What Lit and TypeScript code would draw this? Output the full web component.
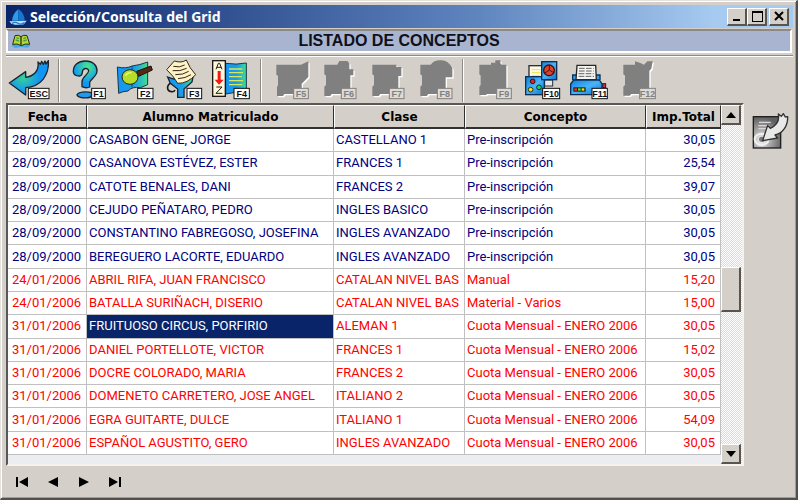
import { LitElement, html, svg, css, nothing } from "lit";
import { customElement, property, state } from "lit/decorators.js";
import { classMap } from "lit/directives/class-map.js";

interface Row {
  fecha: string;
  alumno: string;
  clase: string;
  concepto: string;
  total: string;
  pending?: boolean;
}

const ROWS: Row[] = [
  { fecha: "28/09/2000", alumno: "CASABON GENE, JORGE", clase: "CASTELLANO 1", concepto: "Pre-inscripción", total: "30,05" },
  { fecha: "28/09/2000", alumno: "CASANOVA ESTÉVEZ, ESTER", clase: "FRANCES 1", concepto: "Pre-inscripción", total: "25,54" },
  { fecha: "28/09/2000", alumno: "CATOTE BENALES, DANI", clase: "FRANCES 2", concepto: "Pre-inscripción", total: "39,07" },
  { fecha: "28/09/2000", alumno: "CEJUDO PEÑATARO, PEDRO", clase: "INGLES BASICO", concepto: "Pre-inscripción", total: "30,05" },
  { fecha: "28/09/2000", alumno: "CONSTANTINO FABREGOSO, JOSEFINA", clase: "INGLES AVANZADO", concepto: "Pre-inscripción", total: "30,05" },
  { fecha: "28/09/2000", alumno: "BEREGUERO LACORTE, EDUARDO", clase: "INGLES AVANZADO", concepto: "Pre-inscripción", total: "30,05" },
  { fecha: "24/01/2006", alumno: "ABRIL RIFA, JUAN FRANCISCO", clase: "CATALAN NIVEL BAS", concepto: "Manual", total: "15,20", pending: true },
  { fecha: "24/01/2006", alumno: "BATALLA SURIÑACH, DISERIO", clase: "CATALAN NIVEL BAS", concepto: "Material - Varios", total: "15,00", pending: true },
  { fecha: "31/01/2006", alumno: "FRUITUOSO CIRCUS, PORFIRIO", clase: "ALEMAN 1", concepto: "Cuota Mensual - ENERO 2006", total: "30,05", pending: true },
  { fecha: "31/01/2006", alumno: "DANIEL PORTELLOTE, VICTOR", clase: "FRANCES 1", concepto: "Cuota Mensual - ENERO 2006", total: "15,02", pending: true },
  { fecha: "31/01/2006", alumno: "DOCRE COLORADO, MARIA", clase: "FRANCES 2", concepto: "Cuota Mensual - ENERO 2006", total: "30,05", pending: true },
  { fecha: "31/01/2006", alumno: "DOMENETO CARRETERO, JOSE ANGEL", clase: "ITALIANO 2", concepto: "Cuota Mensual - ENERO 2006", total: "30,05", pending: true },
  { fecha: "31/01/2006", alumno: "EGRA GUITARTE, DULCE", clase: "ITALIANO 1", concepto: "Cuota Mensual - ENERO 2006", total: "54,09", pending: true },
  { fecha: "31/01/2006", alumno: "ESPAÑOL AGUSTITO, GERO", clase: "INGLES AVANZADO", concepto: "Cuota Mensual - ENERO 2006", total: "30,05", pending: true },
];

const gradients = svg`
  <defs>
    <linearGradient id="sea" x1="0" y1="0" x2="1" y2="0">
      <stop offset="0" stop-color="#1597f5"/><stop offset="0.55" stop-color="#1a9cea"/><stop offset="1" stop-color="#42e08c"/>
    </linearGradient>
    <radialGradient id="mint" cx="0.6" cy="0.22" r="0.6">
      <stop offset="0" stop-color="#48e88c"/><stop offset="1" stop-color="#1195f2"/>
    </radialGradient>
    <radialGradient id="lagoon" cx="0.36" cy="0.5" r="0.42">
      <stop offset="0" stop-color="#38d098"/><stop offset="1" stop-color="#1195f2"/>
    </radialGradient>
    <linearGradient id="sky" x1="0" y1="0" x2="1" y2="1">
      <stop offset="0" stop-color="#0c80e0"/><stop offset="0.5" stop-color="#48b4f8"/><stop offset="1" stop-color="#0a6fd0"/>
    </linearGradient>
  </defs>`;

const silhouette = (d: string) => svg`
  <path d=${d} fill="#fff" transform="translate(4 4)"/>
  <path d=${d} fill="#808080"/>`;

interface Tool {
  key: string;
  label: string;
  view: string;
  badge: [number, number];
  off?: boolean;
  art: unknown;
}

const GROUPS: Tool[][] = [
  [
    {
      key: "ESC", label: "Salir", view: "18 15 144 138", badge: [84, 62],
      art: svg`<path d="M28 93 L77 59 V76 C100 73 118 58 114 30 L121 37 L125 28 L130 37 L135 27 L138 36 L145 26 C148 68 124 104 77 107 V129 Z" fill="url(#lagoon)" stroke="#1c2430" stroke-width="4" stroke-linejoin="round"/>`,
    },
  ],
  [
    {
      key: "F1", label: "Ayuda", view: "192 15 144 138", badge: [274, 41],
      art: svg`<path d="M220 60 C219 38 236 27 256 27 C279 27 292 41 291 57 C290 75 272 80 269 91 V105 Q258 110 246 104 V88 C247 74 264 68 266 57 C265 46 248 47 247 60 C247 67 245 71 238 72 C228 72 221 68 220 60 Z" fill="url(#mint)" stroke="#182430" stroke-width="4"/>
        <path d="M231 129 C233 120 257 117 277 123 L272 135 C258 140 235 138 231 129 Z" fill="#1a9cf0" stroke="#182430" stroke-width="4"/>`,
    },
    {
      key: "F2", label: "Buscar", view: "6 15 144 138", badge: [82, 46],
      art: svg`<path d="M22 45 Q48 51 66 42 Q90 39 113 30 V98 L91 107 Q66 103 54 117 Q38 118 26 124 Z" fill="url(#sea)" stroke="#16364c" stroke-width="3"/>
        <path d="M66 42 V106" stroke="#0f4e80" stroke-width="3"/>
        <path d="M80 58 L123 42 L127 54 L86 73 Z" fill="#5a2812" stroke="#1c1008" stroke-width="3"/>
        <ellipse cx="60" cy="75" rx="24" ry="22" fill="#b8dd28" stroke="#202810" stroke-width="3"/>
        <path d="M46 71 Q52 61 65 62" stroke="#eaf878" stroke-width="4" fill="none"/>`,
    },
    {
      key: "F3", label: "Filtrar", view: "150 15 144 138", badge: [230, 44],
      art: svg`<path d="M184 92 C169 99 169 117 184 119 Q192 120 195 114" fill="none" stroke="#181818" stroke-width="5"/>
        <path d="M173 75 Q210 92 250 70 L246 90 L222 111 V136 H203 V111 L181 94 Z" fill="url(#sea)" stroke="#182430" stroke-width="4"/>
        <path d="M170 53 L193 27 Q215 34 229 24 Q239 49 257 68 Q232 95 203 94 Q190 71 170 53 Z" fill="#fff2c4" stroke="#302818" stroke-width="3"/>
        <path d="M190 43 Q209 48 224 39 M188 56 Q210 59 230 49 M196 68 Q220 69 236 58 M204 80 Q226 79 243 68" fill="none" stroke="#302818" stroke-width="3"/>`,
    },
    {
      key: "F4", label: "Ordenar", view: "294 15 144 138", badge: [371, 46],
      art: svg`<path d="M347 34 Q380 39 409 33 V117 Q378 120 347 126 Z" fill="url(#sea)" stroke="#16364c" stroke-width="3"/>
        <path d="M357 51 H397 M357 62 H399 M357 74 H396 M357 86 H399 M357 98 H397" stroke="#d8e858" stroke-width="4"/>
        <rect x="308" y="26" width="38" height="107" fill="#fff8d8" stroke="#181818" stroke-width="4"/>
        <path d="M318 52 L325 34 H329 L336 52 M321 46 H333 M319 105 H336 L318 124 H337" fill="none" stroke="#181818" stroke-width="3"/>
        <path d="M323 57 H332 V83 H341 L327 98 L314 83 H323 Z" fill="#f01818"/>`,
    },
  ],
  [
    { key: "F5", label: "Función F5", view: "33 15 144 138", badge: [115, 44], off: true, art: silhouette("M64 38 H138 L160 28 V75 L140 95 V126 H88 L84 132 H66 V105 L69 100 V72 L64 68 Z") },
    { key: "F6", label: "Función F6", view: "177 15 144 138", badge: [258, 44], off: true, art: silhouette("M208 38 H247 L253 27 H277 L283 34 V52 H295 V70 H286 V126 H230 L226 132 H208 V104 L213 99 V71 L208 67 Z") },
    { key: "F7", label: "Función F7", view: "321 15 144 138", badge: [402, 44], off: true, art: silhouette("M352 38 H424 V45 H439 V72 H430 V126 H376 L371 132 H352 V104 L357 99 V71 L352 67 Z") },
    { key: "F8", label: "Función F8", view: "465 15 144 138", badge: [546, 44], off: true, art: silhouette("M496 38 H527 Q538 23 559 25 Q580 26 592 48 V76 H572 V126 H520 L515 132 H496 V104 L501 99 V71 L496 67 Z") },
  ],
  [
    { key: "F9", label: "Función F9", view: "24 15 144 138", badge: [109, 44], off: true, art: silhouette("M58 38 H93 V32 H106 V25 H121 V34 L125 38 H139 V126 H82 L77 129 H58 V104 L62 99 V71 L58 67 Z") },
    {
      key: "F10", label: "Gráficos", view: "168 15 144 138", badge: [247, 51],
      art: svg`<rect x="254" y="84" width="24" height="18" fill="#e8e8e8" stroke="#283038" stroke-width="3"/>
        <rect x="207" y="41" width="38" height="36" fill="#fffbe0" stroke="#283038" stroke-width="4"/>
        <path d="M215 53 H242 M215 62 H242 M215 71 H238" stroke="#f0e058" stroke-width="3"/>
        <rect x="197" y="74" width="56" height="54" fill="url(#sky)" stroke="#0c3058" stroke-width="4"/>
        <rect x="245" y="29" width="45" height="54" fill="url(#sky)" stroke="#0c3058" stroke-width="4"/>
        <circle cx="267" cy="55" r="16" fill="#e04028" stroke="#401010" stroke-width="4"/>
        <path d="M268 40 V54 L254 64 M268 54 L281 62" fill="none" stroke="#501010" stroke-width="3"/>
        <circle cx="218" cy="88" r="7" fill="#e02020" stroke="#301010" stroke-width="3"/>
        <circle cx="212" cy="113" r="7" fill="#f0e020" stroke="#303010" stroke-width="3"/>
        <circle cx="237" cy="106" r="7" fill="#20d060" stroke="#103010" stroke-width="3"/>`,
    },
    {
      key: "F11", label: "Imprimir", view: "312 15 144 138", badge: [395, 46],
      art: svg`<path d="M338 84 V69 H420 V84" fill="#30a0f0" stroke="#0c3058" stroke-width="4"/>
        <rect x="428" y="95" width="9" height="12" fill="#d03048" stroke="#401018" stroke-width="3"/>
        <path d="M348 83 L351 40 H407 L409 83 Z" fill="#f4f4f0" stroke="#282828" stroke-width="4"/>
        <path d="M357 49 H401 M357 57 H401 M356 65 H401 M356 73 H402" stroke="#606468" stroke-width="3" stroke-dasharray="17 4"/>
        <path d="M332 96 L341 84 H418 L426 96 V128 H332 Z" fill="url(#sky)" stroke="#0c3058" stroke-width="4"/>
        <rect x="340" y="106" width="37" height="13" fill="#202020"/>
        <rect x="343" y="109" width="8" height="7" fill="#f03020"/><rect x="354" y="109" width="8" height="7" fill="#50e030"/><rect x="365" y="109" width="8" height="7" fill="#f0e020"/>`,
    },
    { key: "F12", label: "Función F12", view: "456 15 144 138", badge: [538, 47], off: true, art: silhouette("M490 38 H525 V28 L541 33 L552 38 L562 28 H578 L574 50 L568 56 V126 H514 L509 131 H490 V104 L495 99 V71 L490 67 Z") },
  ],
];

@customElement("tool-button")
class ToolButton extends LitElement {
  @property({ attribute: false }) tool!: Tool;

  static styles = css`
    :host { display: block; flex: none; }
    button { display: block; width: 48px; height: 46px; padding: 0; border: 0; background: none; }
    svg { display: block; width: 48px; height: 46px; }
    text { font: bold 27px "Liberation Sans", Arial, sans-serif; text-anchor: middle; }
  `;

  render() {
    const t = this.tool;
    const [x, w] = t.badge;
    const ink = t.off ? "#808080" : "#101010";
    return html`<button ?disabled=${t.off} aria-label=${t.label}>
      <svg viewBox=${t.view} aria-hidden="true">
        ${gradients}${t.art}
        <rect x=${x + 1} y="109" width=${w} height="31" fill=${t.off ? "#dedad4" : "#fff"} stroke=${ink} stroke-width="3"/>
        <text x=${x + w / 2 + 1} y="134" fill=${ink}>${t.key}</text>
      </svg>
    </button>`;
  }
}

@customElement("app-root")
class AppRoot extends LitElement {
  @state() private selected = 8;

  static styles = css`
    :host {
      display: block;
      background: #fff;
      font: 13px/18px "Liberation Sans", Arial, sans-serif;
      color: #000;
    }
    * { box-sizing: border-box; }
    button { font: inherit; color: inherit; padding: 0; margin: 0; }
    .window {
      background: #d4cfc8;
      border: 1px solid #e4e2de;
      border-right: 2px solid #505050;
      border-bottom: 2px solid #505050;
      box-shadow: inset 1px 1px #fff, inset -1px -1px #a09c96;
      padding: 4px 3px 0 5px;
      margin-right: 2px;
    }
    .title {
      display: flex;
      align-items: center;
      height: 23px;
      padding: 0 4px 0 2px;
      background: linear-gradient(90deg, #0a246a, #5f85bf 60%, #a6caf0 90%);
    }
    .title h1 {
      flex: 1;
      margin: 0 0 0 2px;
      font: bold 14px/20px "Noto Sans", "DejaVu Sans", sans-serif;
      color: #fff;
    }
    .title svg { width: 20px; height: 18px; }
    .raised {
      display: grid;
      place-items: center;
      background: #d4cfc8;
      border: 1px solid #fff;
      border-right: 2px solid #58544f;
      border-bottom: 2px solid #58544f;
    }
    .caption-btn { width: 20px; height: 18px; }
    .caption-btn.close { margin-left: 2px; }
    .caption-btn svg { width: 14px; height: 12px; }
    .banner {
      display: grid;
      grid-template-columns: 32px 1fr 32px;
      align-items: center;
      height: 24px;
      margin: 1px 1px 2px 0;
      border: 2px solid #fff;
      border-top-color: #8c8a86;
      background: #a8b4d0;
    }
    .banner svg { width: 20px; height: 16px; margin-left: 3px; }
    .banner h2 { margin: 0; text-align: center; font-size: 16px; line-height: 20px; color: #101018; }
    .toolbar {
      display: flex;
      align-items: center;
      height: 48px;
      border-top: 1px solid #8c8a86;
      box-shadow: inset 0 1px #fff;
      padding-top: 1px;
    }
    .sep { flex: none; width: 2px; height: 43px; margin: 0 4px; border-left: 1px solid #8c8a86; border-right: 1px solid #fff; }
    .main { display: flex; align-items: flex-start; }
    .grid {
      flex: 1;
      min-width: 0;
      display: flex;
      border: 2px solid #585858;
      border-right-color: #f4f2ee;
      border-bottom-color: #f4f2ee;
      background: #ecedf0;
    }
    .rows { flex: 1; min-width: 0; padding-bottom: 9px; }
    table { width: 100%; height: 350px; table-layout: fixed; border-spacing: 0; }
    col.fecha { width: 79px; }
    col.clase { width: 131px; }
    col.concepto { width: 181px; }
    col.total { width: 75px; }
    th {
      height: 24px;
      padding: 0;
      background: #d4cfc8;
      border: 1px solid #fff;
      border-right: 1px solid #303030;
      border-bottom: 2px solid #303030;
      font: bold 12px/16px "DejaVu Sans", sans-serif;
    }
    td {
      height: 23px;
      padding: 0 0 0 2px;
      background: #fff;
      border-right: 1px solid #c0c0c0;
      border-bottom: 1px solid #c0c0c0;
      color: #000080;
      font: 13px/18px Roboto, "Liberation Sans", sans-serif;
      white-space: nowrap;
      overflow: hidden;
    }
    td.fecha { padding-left: 4px; }
    td.total { text-align: right; padding-right: 5px; }
    .pending td { color: #f00; }
    td.cursor, .pending td.cursor { background: #0a246a; color: #fff; }
    .scroll {
      flex: none;
      display: flex;
      flex-direction: column;
      width: 21px;
      padding: 0 1px 0 0;
      background: repeating-conic-gradient(#dcd9d4 0 25%, #fff 0 50%) 0 0 / 2px 2px;
    }
    .scroll .raised { width: 20px; height: 20px; }
    .scroll svg { width: 10px; height: 6px; }
    .track { flex: 1; display: grid; grid-template-rows: 142fr 45px 132fr; }
    .thumb { grid-row: 2; background: #d4cfc8; border: 1px solid #fff; border-right: 2px solid #58544f; border-bottom: 2px solid #58544f; }
    .side { flex: none; width: 49px; padding: 9px 0 0 8px; }
    .side button { display: block; width: 38px; height: 38px; background: none; border: 0; }
    .side svg { display: block; width: 38px; height: 38px; }
    .nav { display: flex; height: 32px; align-items: center; }
    .nav button { display: grid; place-items: center; width: 31px; height: 20px; border: 0; background: none; }
    .nav svg { width: 14px; height: 10px; }
  `;

  private row(r: Row, i: number) {
    return html`<tr class=${classMap({ pending: !!r.pending })} @click=${() => (this.selected = i)}>
      <td class="fecha">${r.fecha}</td>
      <td class=${classMap({ cursor: i === this.selected })}>${r.alumno}</td>
      <td>${r.clase}</td>
      <td>${r.concepto}</td>
      <td class="total">${r.total}</td>
    </tr>`;
  }

  render() {
    return html`<div class="window">
      <header class="title">
        <svg viewBox="0 0 60 54" aria-hidden="true">
          <path d="M31 3 C18 14 13 26 12 38 H31 Z" fill="#2e9ae8"/>
          <path d="M31 3 C45 12 50 26 50 38 H31 Z" fill="#1476d0"/>
          <path d="M4 40 L56 38 L48 49 Q28 53 10 47 Z" fill="#b8e0f8"/>
          <path d="M12 46 Q22 40 30 46 T50 44" fill="none" stroke="#207cc8" stroke-width="4"/>
        </svg>
        <h1>Selección/Consulta del Grid</h1>
        <button class="raised caption-btn" aria-label="Minimizar"><svg viewBox="0 0 14 12"><path d="M3 10 H10" stroke="#000" stroke-width="2"/></svg></button>
        <button class="raised caption-btn" aria-label="Maximizar"><svg viewBox="0 0 14 12"><path d="M2 1 H13 V12 H2 Z M3 3 V11 H12 V3 Z" fill="#000" fill-rule="evenodd"/></svg></button>
        <button class="raised caption-btn close" aria-label="Cerrar"><svg viewBox="0 0 14 12"><path d="M3 2 L11 10 M11 2 L3 10" stroke="#000" stroke-width="2"/></svg></button>
      </header>
      <section class="banner">
        <svg viewBox="0 0 60 48" aria-hidden="true">
          <path d="M2 38 L8 30 H52 L58 38 L50 44 L30 42 L12 45 Z" fill="#48a8e8"/>
          <path d="M5 34 L12 8 Q22 4 30 11 Q38 4 48 8 L56 34 Q42 30 31 38 Q18 30 5 34 Z" fill="#b8d838" stroke="#283010" stroke-width="3"/>
          <path d="M30 11 V37" stroke="#283010" stroke-width="4"/>
          <path d="M16 14 L24 17 M14 21 L24 24 M37 17 L45 14 M37 24 L47 21" stroke="#48a040" stroke-width="4"/>
        </svg>
        <h2>LISTADO DE CONCEPTOS</h2>
      </section>
      <nav class="toolbar" aria-label="Herramientas">
        ${GROUPS.map((g, i) => html`${i ? html`<span class="sep"></span>` : nothing}${g.map((t) => html`<tool-button .tool=${t}></tool-button>`)}`)}
      </nav>
      <main class="main">
        <div class="grid">
          <div class="rows">
            <table>
              <colgroup><col class="fecha" /><col /><col class="clase" /><col class="concepto" /><col class="total" /></colgroup>
              <thead><tr><th>Fecha</th><th>Alumno Matriculado</th><th>Clase</th><th>Concepto</th><th>Imp.Total</th></tr></thead>
              <tbody>${ROWS.map((r, i) => this.row(r, i))}</tbody>
            </table>
          </div>
          <div class="scroll">
            <button class="raised" aria-label="Subir"><svg viewBox="0 0 10 6"><path d="M0 6 L5 0 L10 6 Z"/></svg></button>
            <div class="track"><div class="thumb"></div></div>
            <button class="raised" aria-label="Bajar"><svg viewBox="0 0 10 6"><path d="M0 0 H10 L5 6 Z"/></svg></button>
          </div>
        </div>
        <aside class="side">
          <button aria-label="Seleccionar">
            <svg viewBox="336 51 114 114" aria-hidden="true">
              <defs>
                <radialGradient id="glow" cx="0.3" cy="0.75" r="0.75"><stop offset="0" stop-color="#fff"/><stop offset="0.4" stop-color="#b0b0b0"/><stop offset="1" stop-color="#606060"/></radialGradient>
              </defs>
              <rect x="340" y="65" width="82" height="94" fill="url(#glow)" stroke="#202020" stroke-width="4"/>
              <path d="M357 82 H392 M355 92 H388 M355 101 H380" stroke="#d8d8d8" stroke-width="4"/>
              <ellipse cx="365" cy="133" rx="21" ry="17" fill="none" stroke="#f0f0f0" stroke-width="6"/>
              <ellipse cx="366" cy="133" rx="9" ry="8" fill="#787878"/>
              <path d="M368 137 L383 91 L391 100 C408 92 419 77 415 57 L424 64 L430 56 L436 66 L443 65 C444 94 427 116 405 120 L413 129 Z" fill="#e8e8e8" stroke="#303030" stroke-width="4" stroke-linejoin="round"/>
            </svg>
          </button>
        </aside>
      </main>
      <footer class="nav">
        <button aria-label="Primero"><svg viewBox="0 0 14 10"><path d="M1 0 H3 V10 H1 Z M13 0 V10 L4 5 Z"/></svg></button>
        <button aria-label="Anterior"><svg viewBox="0 0 14 10"><path d="M12 0 V10 L2 5 Z"/></svg></button>
        <button aria-label="Siguiente"><svg viewBox="0 0 14 10"><path d="M2 0 V10 L12 5 Z"/></svg></button>
        <button aria-label="Último"><svg viewBox="0 0 14 10"><path d="M1 0 V10 L10 5 Z M11 0 H13 V10 H11 Z"/></svg></button>
      </footer>
    </div>`;
  }
}
